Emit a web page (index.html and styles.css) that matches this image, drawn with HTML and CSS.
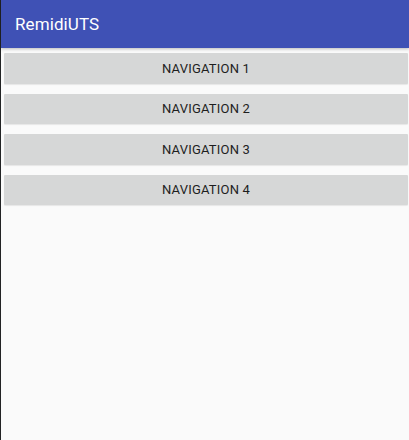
FILE: index.html
```html
<!DOCTYPE html>
<html>
<head>
<meta charset="utf-8">
<link rel="stylesheet" href="styles.css">
</head>
<body>
<div class="screen">
  <header class="appbar">
    <span class="title">RemidiUTS</span>
  </header>
  <main class="nav-list">
    <button class="nav-btn">NAVIGATION 1</button>
    <button class="nav-btn">NAVIGATION 2</button>
    <button class="nav-btn">NAVIGATION 3</button>
    <button class="nav-btn">NAVIGATION 4</button>
  </main>
</div>
</body>
</html>
```
FILE: styles.css
```css
html, body {
  margin: 0;
  padding: 0;
  height: 100%;
  background: #fafafa;
}
.screen {
  height: 440px;
  border-left: 1px solid #222324;
  display: flex;
  flex-direction: column;
  background: #fafafa;
  font-family: Roboto, "Noto Sans", sans-serif;
}
.appbar {
  height: 48px;
  background: #3f51b5;
  display: flex;
  align-items: center;
  padding-left: 14px;
  box-shadow: 0 1px 3px rgba(0,0,0,0.25);
  position: relative;
  z-index: 1;
}
.title {
  color: #ffffff;
  font-size: 17px;
  font-weight: 400;
  letter-spacing: 0.1px;
}
.nav-list {
  display: flex;
  flex-direction: column;
  gap: 10px;
  padding: 5px 1px 0 3px;
}
.nav-btn {
  height: 30.5px;
  border: none;
  border-radius: 1px;
  background: #d6d7d7;
  color: #1e1e1e;
  font-family: Roboto, "Noto Sans", sans-serif;
  font-size: 13px;
  font-weight: 400;
  letter-spacing: 0.2px;
  padding: 0;
  box-shadow: 0 1px 1px rgba(0,0,0,0.08);
}
```
